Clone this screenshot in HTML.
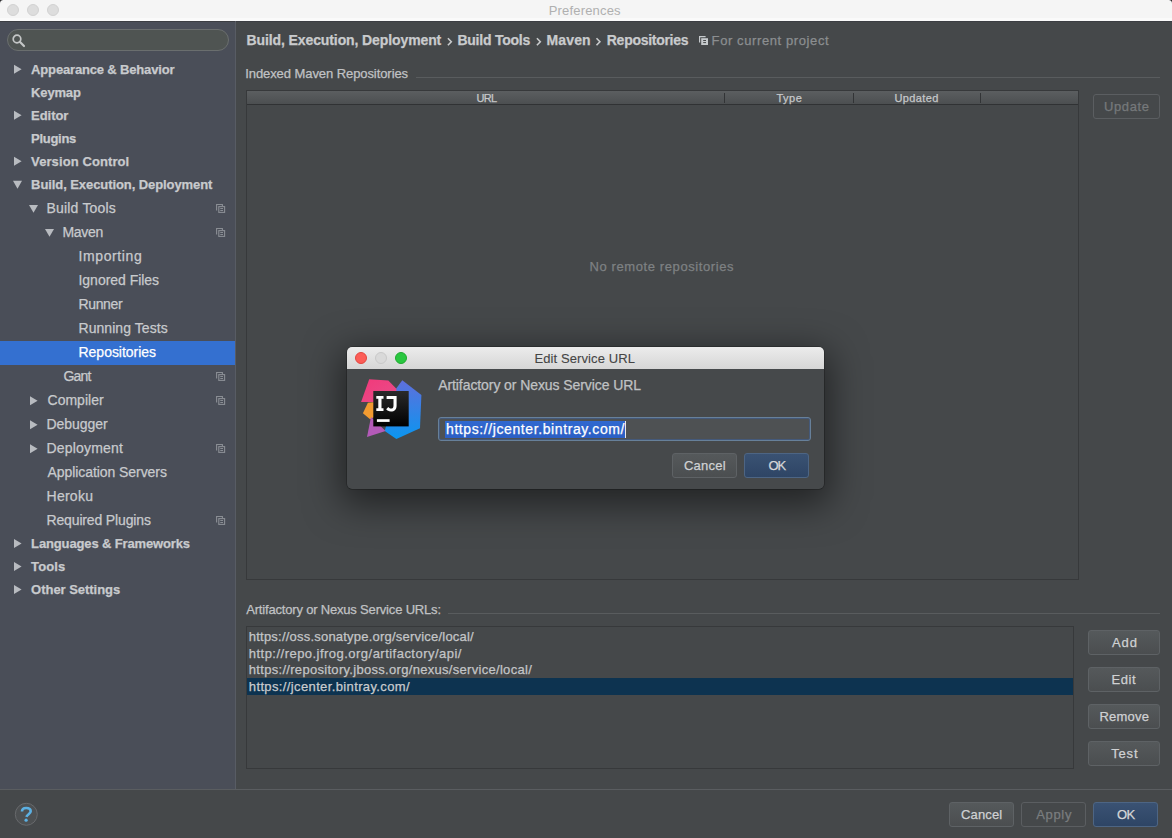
<!DOCTYPE html>
<html><head><meta charset="utf-8"><title>Preferences</title>
<style>
html,body{margin:0;padding:0}
body{width:1172px;height:838px;overflow:hidden;position:relative;background:#45484a;font-family:"Liberation Sans",sans-serif}
.t{position:absolute;line-height:16px;white-space:nowrap;-webkit-text-stroke:0.25px currentColor}
.a{position:absolute;box-sizing:border-box}
.tl{position:absolute;width:12px;height:12px;border-radius:50%;box-sizing:border-box}
.btn{position:absolute;box-sizing:border-box;border:1px solid #5e6265;border-radius:3px;background:linear-gradient(#55595b,#4b4e50)}
.okb{position:absolute;box-sizing:border-box;border:1px solid #4d6584;border-radius:3px;background:linear-gradient(#3a5273,#2e4565)}
.pi{position:absolute;width:11px;height:11px}
</style></head><body>
<!-- window title bar -->
<div class="a" style="left:0;top:0;width:1172px;height:8px;background:#2e2e30"></div>
<div class="a" style="left:0;top:0;width:1172px;height:21px;background:linear-gradient(#f5f5f5 0,#f5f5f5 18px,#fafafa 18px);border-radius:3.5px 3.5px 0 0"></div>
<div class="tl" style="left:7px;top:4px;background:#dddddd;border:1px solid #d2d2d2"></div>
<div class="tl" style="left:27px;top:4px;background:#dddddd;border:1px solid #d2d2d2"></div>
<div class="tl" style="left:47px;top:4px;background:#dddddd;border:1px solid #d2d2d2"></div>

<!-- sidebar -->
<div class="a" style="left:0;top:21px;width:235px;height:768px;background:#4a4e58"></div>
<div class="a" style="left:0;top:21px;width:1172px;height:1px;background:#3c3e43"></div>
<div class="a" style="left:235px;top:21px;width:1px;height:768px;background:#585c64"></div>
<div class="a" style="left:0;top:789px;width:1172px;height:1px;background:#5a5d60"></div>
<!-- search -->
<div class="a" style="left:7px;top:29px;width:222px;height:22px;border-radius:11px;background:#4f5452;border:1px solid #6a6e6e"></div>
<svg class="a" style="left:10px;top:33px" width="18" height="18" viewBox="0 0 18 18"><circle cx="7" cy="6" r="3.8" fill="none" stroke="#c4c6c6" stroke-width="1.7"/><line x1="9.8" y1="8.8" x2="14" y2="13" stroke="#c4c6c6" stroke-width="2.2" stroke-linecap="round"/></svg>
<!-- selection -->
<div class="a" style="left:0;top:341px;width:235px;height:24px;background:#3470d0"></div>
<!-- tree arrows -->
<svg class="a" style="left:0;top:0" width="235" height="790">
<g fill="#b8bbc0">
<polygon points="14,64.8 14,73.8 21.6,69.3"/>
<polygon points="14,110.8 14,119.8 21.6,115.3"/>
<polygon points="14,156.8 14,165.8 21.6,161.3"/>
<polygon points="13,180.8 22,180.8 17.5,188.7"/>
<polygon points="29,204.9 38,204.9 33.5,212.7"/>
<polygon points="45,228.9 54,228.9 49.5,236.8"/>
<polygon points="30,396.3 30,405.3 37.6,400.8"/>
<polygon points="30,420.3 30,429.3 37.6,424.8"/>
<polygon points="30,444.3 30,453.3 37.6,448.8"/>
<polygon points="14,539 14,548 21.6,543.5"/>
<polygon points="14,562 14,571 21.6,566.5"/>
<polygon points="14,585 14,594 21.6,589.5"/>
</g>
<g fill="none" stroke="#8a8e94" stroke-width="1.1">
<g transform="translate(0,0)">
<path d="M216.6,210.5 V204.5 H222.4 V206.2"/><rect x="218.8" y="206.6" width="5.8" height="5.8"/><path d="M220.3,208.5 H223 M220.3,210.5 H223" stroke-width="1.2"/>
</g>
<g transform="translate(0,24)">
<path d="M216.6,210.5 V204.5 H222.4 V206.2"/><rect x="218.8" y="206.6" width="5.8" height="5.8"/><path d="M220.3,208.5 H223 M220.3,210.5 H223" stroke-width="1.2"/>
</g>
<g transform="translate(0,168)">
<path d="M216.6,210.5 V204.5 H222.4 V206.2"/><rect x="218.8" y="206.6" width="5.8" height="5.8"/><path d="M220.3,208.5 H223 M220.3,210.5 H223" stroke-width="1.2"/>
</g>
<g transform="translate(0,192)">
<path d="M216.6,210.5 V204.5 H222.4 V206.2"/><rect x="218.8" y="206.6" width="5.8" height="5.8"/><path d="M220.3,208.5 H223 M220.3,210.5 H223" stroke-width="1.2"/>
</g>
<g transform="translate(0,240)">
<path d="M216.6,210.5 V204.5 H222.4 V206.2"/><rect x="218.8" y="206.6" width="5.8" height="5.8"/><path d="M220.3,208.5 H223 M220.3,210.5 H223" stroke-width="1.2"/>
</g>
<g transform="translate(0,312)">
<path d="M216.6,210.5 V204.5 H222.4 V206.2"/><rect x="218.8" y="206.6" width="5.8" height="5.8"/><path d="M220.3,208.5 H223 M220.3,210.5 H223" stroke-width="1.2"/>
</g>
</g>
</svg>

<!-- main panel -->
<svg class="a" style="left:0;top:0" width="1172" height="838">
<g fill="none" stroke="#c9cbcd" stroke-width="1.6">
<polyline points="447.9,38.2 451.3,41.7 447.9,45.2"/>
<polyline points="536.9,38.2 540.3,41.7 536.9,45.2"/>
<polyline points="596.5,38.2 599.9,41.7 596.5,45.2"/>
</g>
<g fill="none" stroke="#c5c9cc" stroke-width="1.2">
<path d="M699.6,42.6 V36.6 H705.6"/>
</g>
<rect x="701.2" y="38.2" width="6.8" height="6.8" fill="#c5c9cc"/>
<path d="M703.2,40.5 H706 M703.2,42.6 H706" stroke="#45484a" stroke-width="1"/>
</svg>
<div class="a" style="left:416px;top:77px;width:744px;height:1px;background:#595c5e"></div>
<!-- table -->
<div class="a" style="left:246px;top:90px;width:833px;height:490px;border:1px solid #37393b"></div>
<div class="a" style="left:247px;top:91px;width:831px;height:13px;background:linear-gradient(#5b5e60,#4c4f51)"></div>
<div class="a" style="left:247px;top:104px;width:831px;height:1px;background:#303234"></div>
<div class="a" style="left:724px;top:93px;width:1px;height:10px;background:#323436"></div>
<div class="a" style="left:853px;top:93px;width:1px;height:10px;background:#323436"></div>
<div class="a" style="left:980px;top:93px;width:1px;height:10px;background:#323436"></div>
<!-- Update button (disabled) -->
<div class="a" style="left:1093px;top:94px;width:67px;height:25px;border:1px solid #5b5e61;border-radius:3px"></div>
<div class="a" style="left:448px;top:613px;width:712px;height:1px;background:#595c5e"></div>
<!-- list -->
<div class="a" style="left:246px;top:626px;width:828px;height:143px;border:1px solid #37393b"></div>
<div class="a" style="left:247px;top:678px;width:826px;height:17px;background:#0d3350"></div>
<!-- side buttons -->
<div class="btn" style="left:1088px;top:630px;width:72px;height:25px"></div>
<div class="btn" style="left:1088px;top:667px;width:72px;height:25px"></div>
<div class="btn" style="left:1088px;top:704px;width:72px;height:25px"></div>
<div class="btn" style="left:1088px;top:741px;width:72px;height:25px"></div>
<!-- bottom buttons -->
<div class="btn" style="left:949px;top:802px;width:65px;height:25px"></div>
<div class="a" style="left:1021px;top:802px;width:65px;height:25px;border:1px solid #5b5e61;border-radius:3px"></div>
<div class="okb" style="left:1093px;top:802px;width:65px;height:25px"></div>
<!-- help -->
<svg class="a" style="left:12px;top:800px" width="30" height="30" viewBox="0 0 30 30"><circle cx="14.3" cy="14.3" r="11" fill="#4d5052" stroke="#67696c" stroke-width="1"/><path d="M10,11.6 C10,9.2 11.8,8 14.2,8 C16.8,8 18.7,9.3 18.7,11.3 C18.7,13.9 15.2,14.2 14.4,16.8" fill="none" stroke="#5cb0e2" stroke-width="2.6"/><circle cx="14.1" cy="20.2" r="1.6" fill="#5cb0e2"/></svg>

<div class="t" style="left:31.10px;top:62.10px;font-size:13px;font-weight:bold;letter-spacing:-0.160px;color:#c8cacd;">Appearance &amp; Behavior</div>
<div class="t" style="left:31.10px;top:85.10px;font-size:13px;font-weight:bold;letter-spacing:-0.167px;color:#c8cacd;">Keymap</div>
<div class="t" style="left:31.10px;top:108.10px;font-size:13px;font-weight:bold;letter-spacing:-0.059px;color:#c8cacd;">Editor</div>
<div class="t" style="left:31.10px;top:131.10px;font-size:13px;font-weight:bold;letter-spacing:-0.286px;color:#c8cacd;">Plugins</div>
<div class="t" style="left:31.10px;top:154.10px;font-size:13px;font-weight:bold;letter-spacing:0.094px;color:#c8cacd;">Version Control</div>
<div class="t" style="left:31.10px;top:177.10px;font-size:13px;font-weight:bold;letter-spacing:-0.079px;color:#c8cacd;">Build, Execution, Deployment</div>
<div class="t" style="left:46.50px;top:199.95px;font-size:14px;letter-spacing:0.190px;color:#c8cacd;">Build Tools</div>
<div class="t" style="left:62.50px;top:223.95px;font-size:14px;letter-spacing:-0.309px;color:#c8cacd;">Maven</div>
<div class="t" style="left:78.50px;top:247.95px;font-size:14px;letter-spacing:0.603px;color:#c8cacd;">Importing</div>
<div class="t" style="left:78.50px;top:271.95px;font-size:14px;letter-spacing:-0.028px;color:#c8cacd;">Ignored Files</div>
<div class="t" style="left:78.50px;top:295.95px;font-size:14px;letter-spacing:-0.371px;color:#c8cacd;">Runner</div>
<div class="t" style="left:78.50px;top:319.95px;font-size:14px;letter-spacing:0.057px;color:#c8cacd;">Running Tests</div>
<div class="t" style="left:78.50px;top:343.95px;font-size:14px;letter-spacing:-0.019px;color:#ffffff;">Repositories</div>
<div class="t" style="left:63.50px;top:367.95px;font-size:14px;letter-spacing:-0.821px;color:#c8cacd;">Gant</div>
<div class="t" style="left:47.50px;top:391.95px;font-size:14px;letter-spacing:0.021px;color:#c8cacd;">Compiler</div>
<div class="t" style="left:46.50px;top:415.95px;font-size:14px;letter-spacing:-0.032px;color:#c8cacd;">Debugger</div>
<div class="t" style="left:46.50px;top:439.95px;font-size:14px;letter-spacing:0.176px;color:#c8cacd;">Deployment</div>
<div class="t" style="left:47.50px;top:463.95px;font-size:14px;letter-spacing:-0.067px;color:#c8cacd;">Application Servers</div>
<div class="t" style="left:46.50px;top:487.95px;font-size:14px;letter-spacing:0.271px;color:#c8cacd;">Heroku</div>
<div class="t" style="left:46.50px;top:511.95px;font-size:14px;letter-spacing:-0.148px;color:#c8cacd;">Required Plugins</div>
<div class="t" style="left:31.10px;top:536.20px;font-size:13px;font-weight:bold;letter-spacing:-0.138px;color:#c8cacd;">Languages &amp; Frameworks</div>
<div class="t" style="left:31.10px;top:559.20px;font-size:13px;font-weight:bold;letter-spacing:0.083px;color:#c8cacd;">Tools</div>
<div class="t" style="left:31.10px;top:582.20px;font-size:13px;font-weight:bold;letter-spacing:-0.033px;color:#c8cacd;">Other Settings</div>
<div class="t" style="left:548.70px;top:3.00px;font-size:13px;letter-spacing:0.181px;color:#b0b0b0;-webkit-text-stroke:0;">Preferences</div>
<div class="t" style="left:246.60px;top:31.95px;font-size:14px;font-weight:bold;letter-spacing:-0.108px;color:#c9cbcd;">Build, Execution, Deployment</div>
<div class="t" style="left:457.40px;top:31.95px;font-size:14px;font-weight:bold;letter-spacing:-0.229px;color:#c9cbcd;">Build Tools</div>
<div class="t" style="left:546.50px;top:31.95px;font-size:14px;font-weight:bold;letter-spacing:0.145px;color:#c9cbcd;">Maven</div>
<div class="t" style="left:606.80px;top:31.95px;font-size:14px;font-weight:bold;letter-spacing:-0.283px;color:#c9cbcd;">Repositories</div>
<div class="t" style="left:711.60px;top:32.80px;font-size:13px;letter-spacing:0.601px;color:#8b8e90;">For current project</div>
<div class="t" style="left:245.20px;top:66.00px;font-size:13px;letter-spacing:-0.074px;color:#c0c2c4;">Indexed Maven Repositories</div>
<div class="t" style="left:476.50px;top:89.99px;font-size:11px;letter-spacing:-0.694px;color:#c6c8ca;">URL</div>
<div class="t" style="left:776.50px;top:89.99px;font-size:11px;letter-spacing:0.490px;color:#c6c8ca;">Type</div>
<div class="t" style="left:894.40px;top:89.99px;font-size:11px;letter-spacing:0.405px;color:#c6c8ca;">Updated</div>
<div class="t" style="left:1103.90px;top:99.20px;font-size:13px;letter-spacing:0.642px;color:#76797b;">Update</div>
<div class="t" style="left:589.60px;top:259.00px;font-size:13px;letter-spacing:0.595px;color:#7e8183;">No remote repositories</div>
<div class="t" style="left:246.20px;top:601.90px;font-size:13px;letter-spacing:-0.182px;color:#c0c2c4;">Artifactory or Nexus Service URLs:</div>
<div class="t" style="left:248.80px;top:628.70px;font-size:13px;letter-spacing:0.214px;color:#c3c5c7;">https://oss.sonatype.org/service/local/</div>
<div class="t" style="left:248.80px;top:645.60px;font-size:13px;letter-spacing:0.473px;color:#c3c5c7;">http://repo.jfrog.org/artifactory/api/</div>
<div class="t" style="left:248.80px;top:662.40px;font-size:13px;letter-spacing:0.301px;color:#c3c5c7;">https://repository.jboss.org/nexus/service/local/</div>
<div class="t" style="left:248.80px;top:679.20px;font-size:13px;letter-spacing:0.372px;color:#c9cbcd;">https://jcenter.bintray.com/</div>
<div class="t" style="left:1112.00px;top:635.00px;font-size:13px;letter-spacing:0.950px;color:#cfd1d3;">Add</div>
<div class="t" style="left:1111.50px;top:672.00px;font-size:13px;letter-spacing:0.537px;color:#cfd1d3;">Edit</div>
<div class="t" style="left:1099.50px;top:709.00px;font-size:13px;letter-spacing:0.225px;color:#cfd1d3;">Remove</div>
<div class="t" style="left:1111.20px;top:746.00px;font-size:13px;letter-spacing:0.823px;color:#cfd1d3;">Test</div>
<div class="t" style="left:961.00px;top:807.00px;font-size:13px;letter-spacing:0.144px;color:#cfd1d3;">Cancel</div>
<div class="t" style="left:1036.30px;top:807.00px;font-size:13px;letter-spacing:0.645px;color:#7a7d7f;">Apply</div>
<div class="t" style="left:1116.90px;top:807.00px;font-size:13px;letter-spacing:-0.512px;color:#d4d6d8;">OK</div>

<!-- dialog -->
<div class="a" style="left:347px;top:347px;width:477px;height:142px;border-radius:5px;background:#46494b;overflow:hidden;box-shadow:0 0 0 0.5px rgba(0,0,0,0.4),0 10px 36px 6px rgba(0,0,0,0.5)">
  <div class="a" style="left:0;top:0;width:477px;height:22px;background:linear-gradient(#ececec,#d6d6d6)"></div>
</div>
<div class="tl" style="left:355px;top:352px;background:#fc5d57;border:1px solid #e2463f"></div>
<div class="tl" style="left:375px;top:352px;background:#d9d9d9;border:1px solid #c9c9c9"></div>
<div class="tl" style="left:395px;top:352px;background:#2ac740;border:1px solid #1faa2f"></div>
<!-- logo -->
<svg class="a" style="left:352px;top:372px" width="80" height="76" viewBox="0 0 80 76">
<defs>
<linearGradient id="gb" x1="0" y1="0" x2="0" y2="1"><stop offset="0" stop-color="#5f6fdc"/><stop offset="1" stop-color="#0a96f0"/></linearGradient>
<linearGradient id="gp" x1="0" y1="0" x2="1" y2="1"><stop offset="0" stop-color="#f2397a"/><stop offset="1" stop-color="#e84d8a"/></linearGradient>
<linearGradient id="gk" x1="0" y1="0" x2="0" y2="1"><stop offset="0" stop-color="#2a2a2a"/><stop offset="1" stop-color="#000"/></linearGradient>
</defs>
<polygon points="50.3,8.2 69.4,23.1 68,56.2 44.4,67.1 32.7,59 44.4,16.3" fill="url(#gb)"/>
<polygon points="15.9,30.8 10.9,41.3 18.1,47.2 24,44 24,30" fill="#f39b30"/>
<polygon points="15,64.9 19,45 33.6,59" fill="#b35ab8"/>
<polygon points="17.2,7.3 36.3,8.6 44.4,16.8 44,30 9.1,29.9" fill="url(#gp)"/>
<rect x="21.3" y="19" width="35.4" height="35.4" fill="url(#gk)"/>
<path d="M24.3,24 H31.5 V26.8 H29.5 V36.2 H31.5 V39 H24.3 V36.2 H26.3 V26.8 H24.3 Z" fill="#fff"/>
<path d="M34.6,24 H44.6 V33.4 C44.6,37.4 42.5,39.4 38.9,39.4 C36.8,39.4 35.2,38.6 34.2,37.2 L36.3,35 C36.9,35.9 37.8,36.5 38.9,36.5 C40.6,36.5 41.5,35.6 41.5,33.4 V26.9 H34.6 Z" fill="#fff"/>
<rect x="24.9" y="47.2" width="12.7" height="2.7" fill="#fff"/>
</svg>
<!-- text field -->
<div class="a" style="left:438px;top:417px;width:373px;height:24px;border-radius:3px;background:#4e5153;border:1px solid #67809a;box-shadow:inset 0 0 0 1px #44597a"></div>
<div class="a" style="left:444.5px;top:421px;width:180.5px;height:16.5px;background:linear-gradient(#3068d0,#2c5fc4)"></div>
<div class="a" style="left:625px;top:421px;width:1px;height:17px;background:#e8e8e8"></div>
<div class="btn" style="left:672px;top:453px;width:65px;height:25px"></div>
<div class="okb" style="left:744px;top:453px;width:65px;height:25px"></div>
<div class="t" style="left:534.50px;top:351.10px;font-size:13px;letter-spacing:0.097px;color:#454545;-webkit-text-stroke:0.1px currentColor;">Edit Service URL</div>
<div class="t" style="left:438.20px;top:377.05px;font-size:14px;letter-spacing:-0.081px;color:#c0c2c4;">Artifactory or Nexus Service URL</div>
<div class="t" style="left:446.00px;top:420.65px;font-size:14px;letter-spacing:0.597px;color:#ffffff;">https://jcenter.bintray.com/</div>
<div class="t" style="left:684.00px;top:457.50px;font-size:13px;letter-spacing:0.224px;color:#cfd1d3;">Cancel</div>
<div class="t" style="left:768.40px;top:457.50px;font-size:13px;letter-spacing:-1.012px;color:#d4d6d8;">OK</div>
</body></html>
